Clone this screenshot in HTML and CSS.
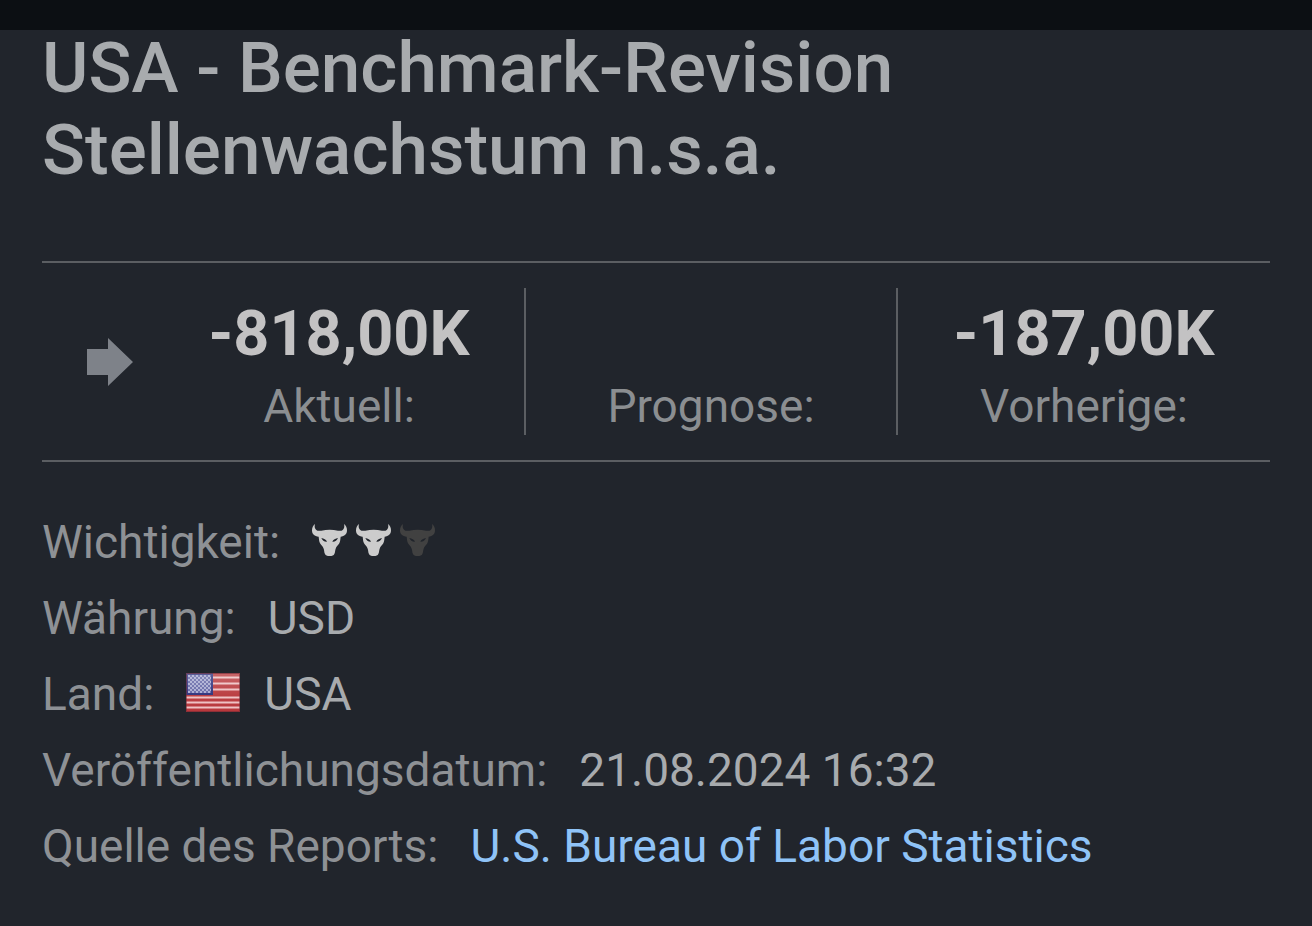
FILE: index.html
```html
<!DOCTYPE html>
<html lang="de">
<head>
  <meta charset="UTF-8" />
  <meta name="viewport" content="width=device-width, initial-scale=1.0"/>
  <title>USA - Benchmark-Revision Stellenwachstum n.s.a.</title>
  <link rel="stylesheet" href="styles.css">
</head>
<body>

  <!-- shared shapes -->
  <svg class="defs" aria-hidden="true">
    <symbol id="bull" viewBox="0 0 105 96">
      <path fill-rule="evenodd" d="M9 0C3 4 0 11 0 19C0 31 8 37 20 38C21 45 21 52 24 58C27 64 33 67 35 74C37 79 36 84 39 90C41 95 45 96 53 96C61 96 65 95 67 90C70 84 69 79 71 74C73 67 79 64 82 58C85 52 85 45 86 38C97 37 105 31 105 19C105 11 102 4 96 0C98 7 97 13 93 17C89 21 84 21 78 20C70 18 61 17 53 17C45 17 36 18 28 20C21 21 16 21 12 17C8 13 7 7 9 0ZM28 42C35 43 43 47 45 53C38 54 31 50 28 42ZM78 42C71 43 63 47 61 53C68 54 75 50 78 42Z"/>
    </symbol>
    <pattern id="stars" width="4" height="4" patternUnits="userSpaceOnUse">
      <rect width="4" height="4" fill="#6265a5"/>
      <circle cx="1" cy="1" r="0.9" fill="#c8cae6"/>
      <circle cx="3" cy="3" r="0.9" fill="#c8cae6"/>
    </pattern>
    <linearGradient id="shine" x1="0" y1="0" x2="0" y2="1">
      <stop offset="0" stop-color="#fff" stop-opacity="0.24"/>
      <stop offset="0.55" stop-color="#fff" stop-opacity="0.05"/>
      <stop offset="1" stop-color="#fff" stop-opacity="0"/>
    </linearGradient>
  </svg>

  <div class="topbar"></div>

  <main class="event">
    <h1>USA - Benchmark-Revision Stellenwachstum n.s.a.</h1>

    <div class="stats">
      <div class="trend">
        <svg class="arrow" viewBox="0 0 46 48" aria-hidden="true">
          <path d="M0 11H21V0L46 24L21 48V37H0Z"/>
        </svg>
      </div>
      <div class="stat">
        <div class="value">-818,00K</div>
        <div class="label">Aktuell:</div>
      </div>
      <div class="stat">
        <div class="value"></div>
        <div class="label">Prognose:</div>
      </div>
      <div class="stat">
        <div class="value">-187,00K</div>
        <div class="label">Vorherige:</div>
      </div>
    </div>

    <dl class="details">
      <div class="row">
        <dt>Wichtigkeit:</dt>
        <dd class="bulls">
          <svg class="bull"><use href="#bull"/></svg>
          <svg class="bull"><use href="#bull"/></svg>
          <svg class="bull off"><use href="#bull"/></svg>
        </dd>
      </div>
      <div class="row">
        <dt>Währung:</dt>
        <dd>USD</dd>
      </div>
      <div class="row">
        <dt>Land:</dt>
        <dd class="country">
          <svg class="flag" viewBox="0 0 54 39" aria-hidden="true">
            <rect width="54" height="39" fill="#b8373b"/>
            <path d="M0 4.5H54M0 10.5H54M0 16.5H54M0 24.5H54M0 29.5H54M0 34.5H54" stroke="#eec0c2" stroke-width="2"/>
            <rect width="27" height="22" fill="#2b2f7a"/>
            <rect x="2" y="2" width="23" height="18" fill="url(#stars)"/>
            <rect width="54" height="39" fill="url(#shine)"/>
            <rect x="0.5" y="0.5" width="53" height="38" fill="none" stroke="#702a35" stroke-opacity="0.6"/>
          </svg>
          USA
        </dd>
      </div>
      <div class="row">
        <dt>Veröffentlichungsdatum:</dt>
        <dd>21.08.2024 16:32</dd>
      </div>
      <div class="row">
        <dt>Quelle des Reports:</dt>
        <dd><a href="#">U.S. Bureau of Labor Statistics</a></dd>
      </div>
    </dl>
  </main>

</body>
</html>
```
FILE: styles.css
```css
*, *::before, *::after {
  box-sizing: border-box;
}

* {
  margin: 0;
}

body {
  background: #21252c;
  color: #a8abae;
  font-family: Roboto, sans-serif;
  font-size: 46px;
}

svg {
  display: block;
  flex-shrink: 0;
}

.defs {
  position: absolute;
  width: 0;
  height: 0;
}

.topbar {
  height: 30px;
  background: #0c0f13;
}

.event {
  padding: 0 42px 42px;
}

h1 {
  max-width: 1000px;
  margin-top: -3px;
  font-size: 71px;
  line-height: 82px;
  font-weight: 500;
}

/* figures */
.stats {
  display: grid;
  grid-template-columns: 112px repeat(3, 1fr);
  margin-top: 70px;
  padding: 25px 0;
  border-top: 2px solid #5b5e62;
  border-bottom: 2px solid #5b5e62;
}

.trend {
  display: flex;
  align-items: center;
  padding-left: 45px;
}

.arrow {
  width: 46px;
  height: 48px;
  fill: #7e8289;
}

.stat {
  text-align: center;
  border-right: 2px solid #5b5e62;
}

.stat:last-child {
  border-right: none;
}

.value {
  height: 90px;
  font-size: 63px;
  line-height: 92px;
  font-weight: 700;
  color: #c3c2c3;
}

.label {
  line-height: 57px;
  color: #8b8e91;
}

/* details */
.details {
  margin-top: 42px;
}

.row {
  display: flex;
  gap: 32px;
  line-height: 76px;
}

dt {
  color: #8e9195;
}

.bulls {
  display: flex;
  align-items: center;
  gap: 9px;
}

.bull {
  width: 35px;
  height: 32px;
  margin-bottom: 4px;
  fill: #cccccc;
}

.bull.off {
  fill: #414141;
}

.country {
  display: flex;
  align-items: center;
  gap: 24px;
}

.flag {
  width: 54px;
  height: 39px;
  margin-bottom: 4px;
}

a {
  color: #8fc3f7;
  text-decoration: none;
}
```
